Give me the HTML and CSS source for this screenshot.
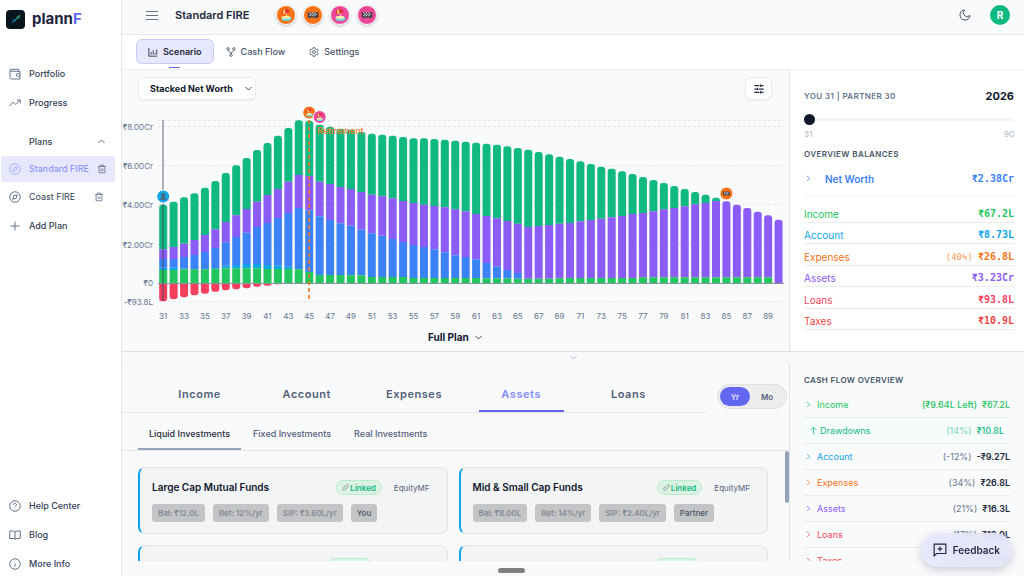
FILE: index.html
```html
<!DOCTYPE html>
<html lang="en">
<head>
<meta charset="utf-8">
<meta name="viewport" content="width=device-width, initial-scale=1">
<title>plannF – Standard FIRE</title>
<link rel="stylesheet" href="styles.css">
</head>
<body>
<svg class="defs" aria-hidden="true">
  <defs>
    <symbol id="beach" viewBox="0 0 20 20">
      <ellipse cx="10.500" cy="14" rx="5.500" ry="2.800" fill="#5fd9e6"/>
      <ellipse cx="10" cy="12.800" rx="4.800" ry="1.600" fill="#ffe9a0"/>
      <path d="M9.300 6.500l2.400 6" stroke="#fff3d6" stroke-width="0.900"/>
      <path d="M5.200 9.600C4.800 6.300 6.500 4 9 3.500c2.500-.4 4.600.9 5.200 3.200z" fill="#e02f3c"/>
      <path d="M6.800 9c-.7-2.600.3-4.700 2-5.400.3 1.600.6 3.200.5 4.800z" fill="#ffd35c"/>
    </symbol>
    <symbol id="flags" viewBox="0 0 20 20">
      <path d="M4.600 7l2.200 8M15.400 7l-2.200 8" stroke="#7a5a48" stroke-width="0.800"/>
      <path d="M4.200 6.800c2 .8 3.800-.4 5.800.3 2-.7 3.800.5 5.800-.3v6c-2 .8-3.800-.4-5.800.3-2-.7-3.800.5-5.800-.3z" fill="#3a3a40"/>
      <path d="M5.800 7.300h1.400v1.400H5.800zM8.600 7H10v1.400H8.600zM11.400 7.300h1.400v1.400h-1.400zM7.200 8.700h1.400v1.400H7.200zM10 8.700h1.400v1.400H10zM12.800 8.700h1.400v1.400h-1.400zM5.800 10.100h1.400v1.400H5.800zM8.600 10.100H10v1.400H8.600zM11.400 10.100h1.400v1.400h-1.400z" fill="#dcdce0"/>
    </symbol>
    <symbol id="person" viewBox="0 0 20 20">
      <circle cx="10" cy="7.500" r="3.400" fill="#4b6478"/>
      <path d="M4.500 15.500c0-3.200 2.400-4.600 5.500-4.600s5.500 1.400 5.500 4.600z" fill="#4b6478"/>
    </symbol>
    <symbol id="trash" viewBox="0 0 24 24"><path d="M3 6h18M19 6v15H5V6M8 6V2.500h8V6M10 11v6M14 11v6"/></symbol>
    <symbol id="compass" viewBox="0 0 24 24"><circle cx="12" cy="12" r="10.500"/><path d="M16.500 7.500l-2 7-7 2 2-7z"/></symbol>
    <symbol id="right" viewBox="0 0 24 24"><path d="M8 5l7 7-7 7"/></symbol>
    <symbol id="down" viewBox="0 0 24 24"><path d="M4 8l8 8 8-8"/></symbol>
    <symbol id="link" viewBox="0 0 24 24"><path d="M10 14a5 5 0 0 0 7 0l4-4a5 5 0 0 0-7-7l-2 2M14 10a5 5 0 0 0-7 0l-4 4a5 5 0 0 0 7 7l2-2"/></symbol>
  </defs>
</svg>

<div class="app">
  <aside class="sidebar">
    <a class="brand" href="#">
      <svg class="brand-mark" viewBox="0 0 19 19" aria-hidden="true">
        <defs><linearGradient id="ray" x1="0" y1="1" x2="1" y2="0"><stop offset="0" stop-color="#2563eb"/><stop offset=".5" stop-color="#14948c"/><stop offset="1" stop-color="#22a35e"/></linearGradient></defs>
        <rect width="19" height="19" rx="4" fill="#07141b"/>
        <path d="M5 13.800l2.300-4.600 2.300-.2 1.600-3 3.600-1.600-1.400 4-2.600 1-1.600 2.400-2.200.2z" fill="url(#ray)" opacity=".8"/>
      </svg>
      <span>plann<span class="brand-f">F</span></span>
    </a>
    <nav class="menu" aria-label="Main">
      <a class="item" href="#"><svg class="ico" viewBox="0 0 24 24"><path d="M4 2.500h15v4M2 5v14a3 3 0 0 0 3 3h17V6.500H4A2 2 0 0 1 4 2.500M22 11.500h-5a2.500 2.500 0 0 0 0 5h5"/></svg>Portfolio</a>
      <a class="item" href="#"><svg class="ico" viewBox="0 0 24 24"><path d="M1 18l7.500-8 5 5L22.500 6M15.500 6h7v7"/></svg>Progress</a>
    </nav>
    <nav class="plans" aria-label="Plans">
      <button class="item plans-head" type="button">Plans<svg class="ico-xs" viewBox="0 0 24 24"><path d="M4 16l8-8 8 8"/></svg></button>
      <div class="item plan active"><svg class="ico"><use href="#compass"/></svg><a href="#">Standard FIRE</a><button class="icon-btn" type="button" aria-label="Delete Standard FIRE"><svg class="ico-sm"><use href="#trash"/></svg></button></div>
      <div class="item plan"><svg class="ico"><use href="#compass"/></svg><a href="#">Coast FIRE</a><button class="icon-btn" type="button" aria-label="Delete Coast FIRE"><svg class="ico-sm"><use href="#trash"/></svg></button></div>
      <button class="item" type="button"><svg class="ico" viewBox="0 0 24 24"><path d="M12 3v18M3 12h18"/></svg>Add Plan</button>
    </nav>
    <nav class="menu help" aria-label="Help">
      <a class="item" href="#"><svg class="ico" viewBox="0 0 24 24"><circle cx="12" cy="12" r="10.500"/><path d="M9 9.500a3 3 0 1 1 4.500 2.500c-1 .6-1.500 1-1.500 2.200M12 17v1"/></svg>Help Center</a>
      <a class="item" href="#"><svg class="ico" viewBox="0 0 24 24"><path d="M12 6c-1-1.500-2.500-2-4.500-2H1.500v15h7c2 0 3 .6 3.500 2 .5-1.400 1.500-2 3.500-2h7V4h-6c-2 0-3.500.5-4.500 2zM12 6v15"/></svg>Blog</a>
      <a class="item" href="#"><svg class="ico" viewBox="0 0 24 24"><circle cx="12" cy="12" r="10.500"/><path d="M12 11v6M12 7v1"/></svg>More Info</a>
    </nav>
  </aside>

  <main class="main">
    <header class="topbar">
      <button class="icon-btn burger" type="button" aria-label="Toggle menu"><svg viewBox="0 0 12 10"><path d="M0 1.500h12M0 5.500h12M0 9.500h12"/></svg></button>
      <h1>Standard FIRE</h1>
      <div class="badges">
        <span class="badge orange"><svg><use href="#beach"/></svg></span>
        <span class="badge orange"><svg><use href="#flags"/></svg></span>
        <span class="badge pink"><svg><use href="#beach"/></svg></span>
        <span class="badge pink"><svg><use href="#flags"/></svg></span>
      </div>
      <button class="icon-btn moon" type="button" aria-label="Dark mode"><svg class="ico" viewBox="0 0 24 24"><path d="M11 2a10 10 0 1 0 11 11 7.500 7.500 0 0 1-11-11z"/></svg></button>
      <button class="avatar" type="button">R</button>
    </header>

    <nav class="views" aria-label="Views">
      <a class="view current" href="#"><svg viewBox="0 0 24 24"><path d="M2 2v20h20M7.500 12v6M12.500 8v10M17 14v4M21 6v12"/></svg>Scenario</a>
      <a class="view" href="#"><svg viewBox="0 0 24 24"><circle cx="5" cy="4.500" r="3"/><circle cx="19" cy="4.500" r="3"/><circle cx="12" cy="19.500" r="3"/><path d="M5 7.500c0 5 7 3 7 9M19 7.500c0 5-7 3-7 9"/></svg>Cash Flow</a>
      <a class="view" href="#"><svg viewBox="0 0 24 24"><path d="M10 1.500h4l.8 3 2.500 1.400 3-.9 2 3.500L20 10.700v2.600l2.300 2.200-2 3.500-3-.9-2.500 1.400-.8 3h-4l-.8-3-2.500-1.400-3 .9-2-3.500L4 13.300v-2.600L1.700 8.500l2-3.500 3 .9 2.500-1.400z"/><circle cx="12" cy="12" r="3.500"/></svg>Settings</a>
    </nav>

    <section class="upper">
      <div class="chart-panel">
        <div class="chart-bar">
          <label class="picker boxed"><select aria-label="Chart type"><option>Stacked Net Worth</option><option>Net Worth</option></select><svg class="ico-xs"><use href="#down"/></svg></label>
          <button class="tune" type="button" aria-label="Chart options"><svg viewBox="0 0 24 24"><path d="M1 4h12M18 4h5M16 1v6M1 12h5M11 12h12M8 9v6M1 20h12M18 20h5M16 17v6"/></svg></button>
        </div>
        <svg id="chart" class="chart" viewBox="0 0 667 226" role="img" aria-label="Stacked net worth by age"></svg>
        <label class="picker range"><select aria-label="Range"><option>Full Plan</option></select><svg class="ico-xs"><use href="#down"/></svg></label>
      </div>
      <aside class="balances">
        <div class="row year"><span class="caps">YOU 31 | PARTNER 30</span><strong>2026</strong></div>
        <input class="slider" type="range" min="31" max="90" value="31" aria-label="Age">
        <div class="row ends"><span>31</span><span>90</span></div>
        <h2 class="caps dark">OVERVIEW BALANCES</h2>
        <button class="row worth" type="button"><svg class="ico-xs"><use href="#right"/></svg><span>Net Worth</span><b class="mono">₹2.38Cr</b></button>
        <dl class="list">
          <div class="row c-green"><dt>Income</dt><dd>₹67.2L</dd></div>
          <div class="row c-sky"><dt>Account</dt><dd>₹8.73L</dd></div>
          <div class="row c-orange"><dt>Expenses</dt><dd><small>(40%)</small>₹26.8L</dd></div>
          <div class="row c-violet"><dt>Assets</dt><dd>₹3.23Cr</dd></div>
          <div class="row c-rose"><dt>Loans</dt><dd>₹93.8L</dd></div>
          <div class="row c-red"><dt>Taxes</dt><dd>₹10.9L</dd></div>
        </dl>
      </aside>
    </section>

    <button class="collapse" type="button" aria-label="Collapse panel"><svg class="ico-xs"><use href="#down"/></svg></button>

    <section class="lower">
      <div class="detail">
        <div class="tabs-row">
          <div class="tabs" role="tablist">
            <button type="button" role="tab">Income</button>
            <button type="button" role="tab">Account</button>
            <button type="button" role="tab">Expenses</button>
            <button type="button" role="tab" aria-selected="true">Assets</button>
            <button type="button" role="tab">Loans</button>
          </div>
          <div class="period"><button type="button" aria-pressed="true">Yr</button><button type="button">Mo</button></div>
        </div>
        <div class="subtabs" role="tablist">
          <button type="button" role="tab" aria-selected="true">Liquid Investments</button>
          <button type="button" role="tab">Fixed Investments</button>
          <button type="button" role="tab">Real Investments</button>
        </div>
        <div class="scroll">
          <div class="cards">
            <article class="card">
              <header><h3>Large Cap Mutual Funds</h3><span class="linked"><svg><use href="#link"/></svg>Linked</span><span class="kind">EquityMF</span></header>
              <div class="chips"><span>Bal: ₹12.0L</span><span>Ret: 12%/yr</span><span>SIP: ₹3.60L/yr</span><span class="who">You</span></div>
            </article>
            <article class="card">
              <header><h3>Mid &amp; Small Cap Funds</h3><span class="linked"><svg><use href="#link"/></svg>Linked</span><span class="kind">EquityMF</span></header>
              <div class="chips"><span>Bal: ₹8.00L</span><span>Ret: 14%/yr</span><span>SIP: ₹2.40L/yr</span><span class="who">Partner</span></div>
            </article>
            <article class="card">
              <header><h3>Direct Stocks</h3><span class="linked"><svg><use href="#link"/></svg>Linked</span><span class="kind">EquityStock</span></header>
            </article>
            <article class="card">
              <header><h3>Gold</h3><span class="linked"><svg><use href="#link"/></svg>Linked</span><span class="kind">Gold ETFs</span></header>
            </article>
          </div>
          <div class="rail"><div class="thumb"></div></div>
        </div>
      </div>
      <aside class="cashflow">
        <h2 class="caps dark">CASH FLOW OVERVIEW</h2>
        <ul>
          <li class="c-green"><svg class="ico-xs"><use href="#right"/></svg><span>Income</span><em class="own">(₹9.64L Left)</em><b class="own">₹67.2L</b></li>
          <li class="c-teal draw"><svg class="ico-xs" viewBox="0 0 24 24"><path d="M12 22V3M4 11l8-8 8 8"/></svg><span>Drawdowns</span><em class="own faint">(14%)</em><b class="own">₹10.8L</b></li>
          <li class="c-sky"><svg class="ico-xs"><use href="#right"/></svg><span>Account</span><em>(-12%)</em><b>-₹9.27L</b></li>
          <li class="c-orange"><svg class="ico-xs"><use href="#right"/></svg><span>Expenses</span><em>(34%)</em><b>₹26.8L</b></li>
          <li class="c-violet"><svg class="ico-xs"><use href="#right"/></svg><span>Assets</span><em>(21%)</em><b>₹16.3L</b></li>
          <li class="c-rose"><svg class="ico-xs"><use href="#right"/></svg><span>Loans</span><em>(17%)</em><b>₹13.0L</b></li>
          <li class="c-red"><svg class="ico-xs"><use href="#right"/></svg><span>Taxes</span><em>(14%)</em><b>₹10.9L</b></li>
        </ul>
      </aside>
    </section>
  </main>
</div>
<div class="handle"></div>
<button class="feedback" type="button"><svg viewBox="0 0 24 24"><path d="M2 22V2h20v16H6zM12 6v8M8 10h8"/></svg>Feedback</button>
<script src="chart.js"></script>
</body>
</html>
```
FILE: styles.css
```css
* { box-sizing: border-box; }

body {
  margin: 0;
  font-family: Inter, "Liberation Sans", sans-serif;
  font-size: 9px;
  line-height: 12px;
  color: #334155;
  background: #f9fafc;
}

h1, h2, h3, dl, dd, ul { margin: 0; padding: 0; }
ul { list-style: none; }
a { color: inherit; text-decoration: none; }
button, select { font: inherit; color: inherit; background: none; border: 0; padding: 0; margin: 0; }
svg { fill: none; stroke: currentColor; stroke-width: 2; flex: none; display: block; }
.defs { position: absolute; width: 0; height: 0; }
.ico { width: 12px; height: 12px; }
.ico-sm { width: 10px; height: 10px; }
.ico-xs { width: 9px; height: 9px; }
.icon-btn { display: grid; place-items: center; }

.app { display: flex; height: 100vh; overflow: hidden; }

/* Sidebar */
.sidebar {
  width: 122px;
  flex: none;
  display: flex;
  flex-direction: column;
  background: #fff;
  border-right: 1px solid #e5e7eb;
}
.brand {
  display: flex;
  align-items: center;
  gap: 7px;
  padding: 9px 6px 0;
  font-size: 15px;
  line-height: 20px;
  font-weight: 700;
  color: #1e1f3d;
}
.brand-mark { width: 19px; height: 19px; stroke: none; }
.brand-f { color: #6366f1; }
.menu { display: flex; flex-direction: column; gap: 3px; padding-top: 31px; }
.plans { display: flex; flex-direction: column; gap: 2px; padding-top: 13px; }
.help { margin-top: auto; padding-top: 0; }
.item {
  display: flex;
  align-items: center;
  gap: 8px;
  height: 26px;
  margin: 0 6px 0 1px;
  padding: 1px 11px 0 8px;
  border-radius: 3px;
  font-weight: 500;
  text-align: left;
  white-space: nowrap;
}
.item .ico { color: #64748b; }
.item .icon-btn { margin-left: auto; color: #64748b; }
.item.plans-head { justify-content: space-between; padding: 1px 9px 0 28px; }
.item.plan { font-weight: 400; padding-top: 0; }
.item.active { background: #e7e7fd; color: #818cf8; }
.item.active .ico { color: #a5b4fc; }
.item.active .icon-btn { margin-left: 0; }

/* Header */
.main { flex: 1; min-width: 0; display: flex; flex-direction: column; }
.topbar {
  display: flex;
  align-items: center;
  height: 35px;
  padding: 0 14px 4px 24px;
  border-bottom: 1px solid #e5e7eb;
}
.burger svg { width: 12px; height: 10px; stroke: #64748b; stroke-width: 1; overflow: visible; }
h1 { margin-left: 17px; font-size: 11px; line-height: 16px; font-weight: 600; color: #1e293b; }
.badges { display: flex; gap: 7px; margin-left: 27px; }
.badge {
  width: 20px;
  height: 20px;
  border-radius: 50%;
  border: 1px solid #fff;
  box-shadow: 0 1px 3px rgba(15, 23, 42, .25);
}
.badge svg { width: 18px; height: 18px; stroke: none; }
.orange { background: #f97316; }
.pink { background: #ec4899; }
.moon { margin-left: auto; color: #475569; }
.avatar {
  width: 20px;
  height: 20px;
  margin-left: 19px;
  border-radius: 50%;
  background: #10b981;
  color: #fff;
  font-size: 10px;
  font-weight: 700;
}
.views {
  display: flex;
  align-items: center;
  height: 35px;
  padding: 0 14px 1px;
  background: #fff;
  border-bottom: 1px solid #eef0f3;
}
.view {
  position: relative;
  display: flex;
  align-items: center;
  gap: 5px;
  height: 25px;
  padding: 0 11px;
  border: 1px solid transparent;
  border-radius: 6px;
  font-weight: 500;
  color: #475569;
}
.view svg { width: 10px; height: 10px; }
.current { background: #e7e7fd; border-color: #c9c9fa; color: #1e293b; font-weight: 600; }
.current::after {
  content: "";
  position: absolute;
  left: 50%;
  bottom: -5px;
  width: 11px;
  height: 1px;
  margin-left: -6px;
  background: #6366f1;
}

/* Chart */
.upper { display: grid; grid-template-columns: 1fr 235px; border-bottom: 1px solid #dcdfe4; }
.chart-panel { min-width: 0; display: flex; flex-direction: column; }
.chart-bar { display: flex; justify-content: space-between; align-items: center; padding: 7px 17px 0 16px; }
.picker { display: flex; align-items: center; font-weight: 700; color: #0f172a; }
.picker select { appearance: none; outline: 0; }
.boxed, .tune { height: 23px; background: #fff; border: 1px solid #e8eaee; border-radius: 6px; box-shadow: 0 1px 2px rgba(15, 23, 42, .06); }
.boxed { padding: 0 2px 0 11px; gap: 11px; }
.tune { width: 27px; display: grid; place-items: center; color: #1e293b; }
.tune svg { width: 10px; height: 10px; stroke-width: 3; }
.chart { width: 100%; height: auto; stroke: none; }
.chart text { font-size: 8px; fill: #64748b; }
.chart .tick-y { text-anchor: end; }
.chart .tick-x { text-anchor: middle; }
.chart .event { font-size: 9px; font-weight: 500; fill: #fb7a1e; }
.chart .grid { stroke: #e5e7eb; stroke-width: 1; stroke-dasharray: 3 2; }
.chart .zero { stroke: #8b929c; stroke-width: 1; }
.chart .now { stroke: #374151; stroke-opacity: .4; stroke-width: 2; }
.chart .goal { stroke: #f97316; stroke-opacity: .8; stroke-width: 2; stroke-dasharray: 4 3; }
.range { align-self: center; gap: 5px; padding: 5px 0 8px; font-size: 10px; }

/* Balances */
.balances { display: flex; flex-direction: column; padding: 18px 10px 21px 14px; background: #fff; border-left: 1px solid #e0e3e8; }
.row { display: flex; align-items: center; justify-content: space-between; }
.caps { font-size: 8px; line-height: 12px; font-weight: 600; letter-spacing: .05em; color: #64748b; }
.dark { color: #475569; }
.year strong { font-size: 11px; line-height: 16px; font-weight: 700; color: #0f172a; }
.slider { appearance: none; width: 100%; height: 11px; margin: 10px 0 3px; background: none; }
.slider::-webkit-slider-runnable-track { height: 3px; border-radius: 2px; background: #f3f4f6; }
.slider::-webkit-slider-thumb { appearance: none; width: 11px; height: 11px; margin-top: -4px; border-radius: 50%; background: #0f172a; }
.ends { font-size: 8px; color: #b0b8c6; margin-bottom: 8px; }
.worth { height: 35px; margin-top: 1px; padding-top: 1px; font-size: 10px; font-weight: 600; color: #3b82f6; border-bottom: 1px solid #f1f3f5; }
.worth span { margin: 0 auto 0 12px; }
.mono, .list dd { font-family: "DejaVu Sans Mono", monospace; font-size: 10px; font-weight: 700; }
.list { flex: 1; display: grid; grid-auto-rows: 1fr; margin-top: 5px; font-size: 10px; }
.list .row { border-bottom: 1px solid #eaecef; padding-top: 5px; }
.list small { font-size: 9px; font-weight: 400; margin-right: 5px; opacity: .7; }
.c-green { color: #22c55e; }
.c-teal { color: #10b981; }
.c-sky { color: #0ea5e9; }
.c-orange { color: #f97316; }
.c-violet { color: #8b5cf6; }
.c-rose { color: #f43f5e; }
.c-red { color: #ef4444; }

.collapse { height: 11px; display: grid; place-items: center; color: #94a3b8; border-bottom: 1px solid #f1f3f5; }

/* Detail */
.lower { flex: 1; min-height: 0; display: grid; grid-template-columns: 1fr 235px; grid-template-rows: minmax(0, 1fr); margin-bottom: 15px; }
.detail { min-width: 0; display: flex; flex-direction: column; }
.tabs-row { display: flex; align-items: flex-end; padding-right: 2px; }
.tabs { flex: 1; display: grid; grid-template-columns: repeat(5, 1fr); padding: 13px 24px 0; border-bottom: 1px solid #e5e7eb; }
.tabs button { height: 36px; margin: 0 11px; font-size: 11px; font-weight: 600; letter-spacing: .05em; color: #526077; }
.tabs [aria-selected] { color: #818cf8; border-bottom: 2px solid #6366f1; padding-top: 2px; }
.period { display: flex; height: 25px; margin: 0 0 4px 11px; padding: 2px; border: 1px solid #dfe1e5; border-radius: 13px; background: #ededf0; }
.period button { width: 30px; border-radius: 10px; font-size: 8px; font-weight: 600; color: #526077; }
.period [aria-pressed] { background: #6366f1; color: #e0e7ff; }
.period button + button { width: 34px; }
.subtabs { display: flex; gap: 1px; padding: 0 16px; border-bottom: 1px solid #e5e7eb; }
.subtabs button { height: 37px; padding: 6px 11px 0; border-bottom: 2px solid transparent; font-weight: 500; color: #526077; }
.subtabs [aria-selected] { color: #1e293b; border-color: #94a3b8; }
.scroll { flex: 1; min-height: 0; display: flex; overflow: hidden; }
.cards { flex: 1; display: grid; grid-template-columns: 1fr 1fr; gap: 11px; padding: 16px 17px 0 16px; align-content: start; }
.card { height: 67px; padding: 12px 17px 0 12px; background: #f3f4f6; border: 1px solid #e2e4e8; border-left: 2px solid #0ea5e9; border-radius: 7px; }
.card header { display: flex; align-items: center; }
.card h3 { flex: 1; font-size: 10px; line-height: 15px; font-weight: 600; color: #0f172a; }
.linked { display: flex; align-items: center; gap: 1px; height: 15px; padding: 0 5px; border: 1px solid #b9ecca; border-radius: 8px; background: #dcf3e4; color: #10b981; font-size: 8px; font-weight: 600; }
.linked svg { width: 7px; height: 7px; stroke: #6b7280; }
.kind { margin-left: 12px; font-size: 8px; color: #526077; }
.chips { display: flex; gap: 8px; margin-top: 9px; }
.chips span { height: 18px; padding: 0 6px; border-radius: 3px; background: #c3c4c6; font-size: 8px; line-height: 18px; font-weight: 500; color: #7b8390; }
.chips .who { color: #475569; }
.rail { width: 4px; }
.thumb { height: 52px; border-radius: 2px; background: #94a3b8; }

/* Cash flow */
.cashflow { padding: 11px 14px 0; overflow: hidden; border-left: 1px solid #e0e3e8; }
.cashflow ul { margin-top: 6px; }
.cashflow li { display: flex; align-items: center; height: 26px; border-bottom: 1px solid #e8eaee; }
.cashflow li span { margin: 0 auto 0 4px; }
.cashflow em { font-style: normal; margin-right: 5px; color: #64748b; }
.cashflow b { font-weight: 600; color: #1e293b; }
.cashflow .own { color: inherit; font-weight: 500; }
.cashflow .faint { opacity: .5; }
.cashflow .draw { padding: 0 6px 0 5px; background: #f6fbfb; }
.cashflow .draw span { margin-left: 2px; }

.handle { position: fixed; left: 50%; bottom: 3px; width: 27px; height: 5px; margin-left: -14px; border-radius: 3px; background: #808080; }
.feedback {
  position: fixed;
  right: 12px;
  bottom: 9px;
  display: flex;
  align-items: center;
  gap: 6px;
  height: 34px;
  padding: 0 12px;
  border-radius: 17px;
  background: rgba(228, 228, 250, .85);
  backdrop-filter: blur(4px);
  box-shadow: 0 3px 8px rgba(15, 23, 42, .2);
  font-size: 10px;
  font-weight: 600;
  color: #1e293b;
}
.feedback svg { width: 14px; height: 14px; }
```
FILE: chart.js
```js
const NS = "http://www.w3.org/2000/svg";
const chart = document.getElementById("chart");
const FIRST_AGE = 31;
const STEP = 10.43;
const BAR = 8;
const ZERO = 183;

// Each row: upper edges of the stack (green, violet, blue, sky, base) and depth of debt,
// measured from the zero line, in thirds of a unit.
const rows = [
  [235, 101, 72, 46, 39, 55], [244, 108, 72, 46, 39, 49], [257, 118, 78, 43, 41, 43],
  [269, 129, 84, 42, 41, 37], [286, 144, 93, 42, 41, 32], [306, 161, 105, 45, 43, 26],
  [330, 183, 122, 52, 44, 22], [353, 203, 138, 54, 44, 19], [375, 222, 151, 57, 44, 16],
  [399, 244, 168, 57, 44, 11], [420, 264, 180, 54, 42, 8], [442, 282, 195, 52, 42, 4],
  [465, 304, 210, 49, 42, 2], [488, 324, 225, 42, 41, 0], [487, 321, 218, 33, 33, 0],
  [475, 304, 200, 24, 24, 0], [469, 297, 189, 24, 24, 0], [463, 288, 179, 24, 24, 0],
  [460, 282, 172, 23, 23, 0], [454, 273, 160, 23, 23, 0], [448, 265, 149, 18, 18, 0],
  [445, 260, 142, 18, 18, 0], [442, 254, 132, 18, 18, 0], [438, 246, 123, 18, 18, 0],
  [434, 240, 114, 15, 15, 0], [434, 235, 108, 15, 15, 0], [432, 231, 101, 15, 15, 0],
  [430, 227, 92, 15, 15, 0], [427, 221, 83, 15, 15, 0], [424, 215, 78, 15, 15, 0],
  [421, 207, 71, 15, 15, 0], [418, 201, 60, 14, 14, 0], [415, 194, 50, 14, 14, 0],
  [410, 186, 39, 14, 14, 0], [405, 178, 30, 13, 13, 0], [400, 168, 13, 13, 13, 0],
  [393, 171, 13, 13, 13, 0], [386, 174, 13, 13, 13, 0], [379, 178, 14, 14, 14, 0],
  [372, 180, 15, 15, 15, 0], [365, 185, 15, 15, 15, 0], [357, 189, 15, 15, 15, 0],
  [349, 193, 15, 15, 15, 0], [343, 197, 15, 15, 15, 0], [335, 201, 15, 15, 15, 0],
  [327, 207, 15, 15, 15, 0], [318, 210, 17, 17, 17, 0], [309, 215, 17, 17, 17, 0],
  [300, 221, 17, 17, 17, 0], [291, 225, 17, 17, 17, 0], [282, 230, 17, 17, 17, 0],
  [273, 236, 17, 17, 17, 0], [265, 240, 17, 17, 17, 0], [256, 246, 17, 17, 17, 0],
  [245, 245, 17, 17, 17, 0], [235, 235, 17, 17, 17, 0], [225, 225, 17, 17, 17, 0],
  [214, 214, 17, 17, 17, 0], [203, 203, 17, 17, 17, 0], [190, 190, 0, 0, 0, 0]
];
const colors = ["#10b981", "#8b5cf6", "#3b82f6", "#0ea5e9", "#22c55e"];

function add(name, attrs, text) {
  const el = document.createElementNS(NS, name);
  for (const key in attrs) el.setAttribute(key, attrs[key]);
  if (text) el.textContent = text;
  chart.appendChild(el);
  return el;
}
const centre = age => 41.2 + (age - FIRST_AGE) * STEP;

[[20.5, ""], [26.5, "₹8.00Cr"], [65.5, "₹6.00Cr"], [104.5, "₹4.00Cr"], [144.5, "₹2.00Cr"], [201.5, "-₹93.8L"]].forEach(([y, label]) => {
  add("line", { class: "grid", x1: 36, x2: 662, y1: y, y2: y });
  if (label) add("text", { class: "tick-y", x: 31, y: y + 3 }, label);
});
add("text", { class: "tick-y", x: 31, y: ZERO + 3 }, "₹0");

rows.forEach((row, i) => {
  const age = FIRST_AGE + i;
  const x = centre(age) - BAR / 2;
  const debt = row[5] / 3;
  let rounded = false;
  for (let k = 0; k < 5; k++) {
    const top = row[k] / 3;
    const bottom = k < 4 ? row[k + 1] / 3 : 0;
    const h = top - bottom;
    if (h <= 0) continue;
    const r = rounded ? 0 : Math.min(3, h);
    rounded = true;
    add("path", {
      fill: colors[k],
      d: `M${x} ${ZERO - bottom}v${-(h - r)}q0 ${-r} ${r} ${-r}h${BAR - 2 * r}q${r} 0 ${r} ${r}v${h - r}z`
    });
  }
  if (debt) {
    const r = Math.min(3, debt);
    add("path", { fill: "#f43f5e", d: `M${x} ${ZERO}v${debt - r}q0 ${r} ${r} ${r}h${BAR - 2 * r}q${r} 0 ${r} ${-r}v${r - debt}z` });
  }
  if (i % 2 === 0) add("text", { class: "tick-x", x: centre(age), y: 219 }, String(age));
});

add("line", { class: "zero", x1: 36, x2: 662, y1: 183.5, y2: 183.5 });
add("line", { class: "now", x1: 41, x2: 41, y1: 20, y2: 201 });
add("line", { class: "goal", x1: 187, x2: 187, y1: 20, y2: 202 });
add("text", { class: "event", x: 195, y: 34 }, "Retirement");

function marker(x, y, fill, icon) {
  add("circle", { cx: x, cy: y, r: 6.5, fill, stroke: "#fff", "stroke-width": 1 });
  add("use", { href: "#" + icon, x: x - 6, y: y - 6, width: 12, height: 12 });
}
marker(centre(31), 96.5, "#0ea5e9", "person");
marker(centre(45), 12.5, "#f97316", "beach");
marker(centre(46), 17, "#ec4899", "beach");
marker(centre(85), 93.5, "#f97316", "flags");
```
